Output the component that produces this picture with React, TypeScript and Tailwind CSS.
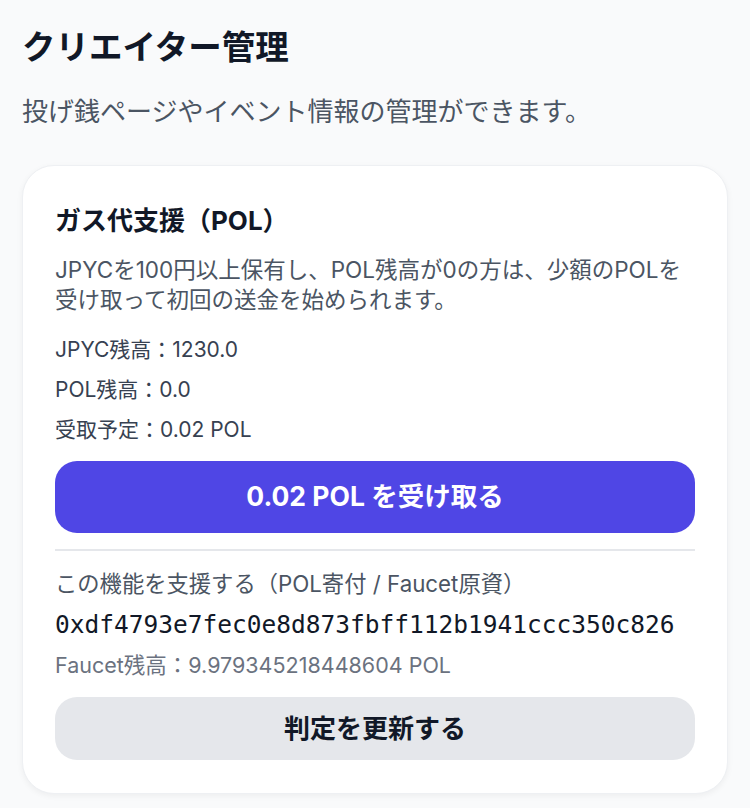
import { FC } from 'react';

const font = { fontFamily: 'Inter, "Noto Sans CJK JP", sans-serif' };

// Stat row in the gas support card
const Stat: FC<{ label: string; value: string }> = ({ label, value }) => (
  <p className="text-[21px] leading-[28px] text-[#374151]">
    {label}：{value}
  </p>
);

const App: FC = () => {
  return (
    <div className="min-h-[808px] bg-[#f9fafb] px-[22px] pt-[27px] pb-4" style={font}>
      <h1 className="text-[33.5px] font-bold leading-[40px] text-[#111827]">クリエイター管理</h1>
      <p className="mt-[27px] text-[26px] leading-[36px] text-[#4b5563]">
        投げ銭ページやイベント情報の管理ができます。
      </p>

      {/* Gas support card */}
      <div className="mt-[35px] rounded-[32px] border border-[#eef0f3] bg-white px-[32px] pt-[39px] pb-[33px] shadow-[0_2px_6px_rgba(0,0,0,0.05)]">
        <h2 className="text-[26px] font-bold leading-[32px] text-[#111827]">ガス代支援（POL）</h2>
        <p className="mt-[18px] text-[22.5px] leading-[30px] text-[#4b5563]">
          JPYCを100円以上保有し、POL残高が0の方は、少額のPOLを受け取って初回の送金を始められます。
        </p>

        <div className="mt-[21px] flex flex-col gap-[12px]">
          <Stat label="JPYC残高" value="1230.0" />
          <Stat label="POL残高" value="0.0" />
          <Stat label="受取予定" value="0.02 POL" />
        </div>

        <button
          type="button"
          className="mt-[17px] flex h-[72px] w-full items-center justify-center rounded-[22px] bg-[#4f46e5] text-[26.5px] font-bold text-white"
        >
          0.02 POL を受け取る
        </button>

        <div className="mt-[16px] border-t-2 border-[#e5e7eb] pt-[18px]">
          <p className="text-[22.3px] leading-[30px] text-[#4b5563]">この機能を支援する（POL寄付 / Faucet原資）</p>
          <p
            className="mt-[10px] text-[24.5px] leading-[32px] text-[#111827]"
            style={{ fontFamily: '"DejaVu Sans Mono", monospace' }}
          >
            0xdf4793e7fec0e8d873fbff112b1941ccc350c826
          </p>
          <p className="mt-[10px] text-[21.5px] leading-[28px] text-[#6b7280]">Faucet残高：9.979345218448604 POL</p>
        </div>

        <button
          type="button"
          className="mt-[18px] flex h-[63px] w-full items-center justify-center rounded-[22px] bg-[#e5e7eb] text-[26px] font-bold text-[#111827]"
        >
          判定を更新する
        </button>
      </div>
    </div>
  );
};

export default App;
